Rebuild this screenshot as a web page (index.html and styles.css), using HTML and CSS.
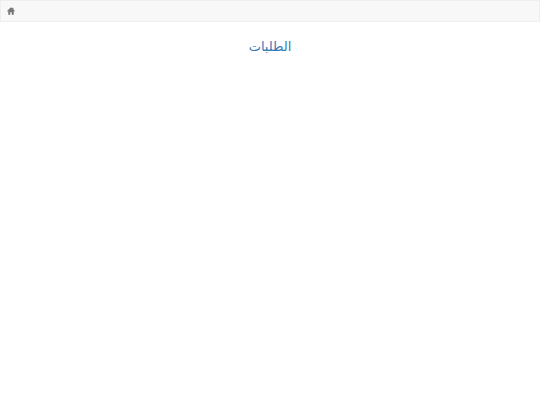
FILE: index.html
```html
<!DOCTYPE html>
<html lang="ar">
<head>
    <meta charset="UTF-8">
    <title>Orders</title>
    <link rel="stylesheet" href="styles.css">
</head>
<body>
    <div class="navbar">
        <a class="home-link" href="#">
            <svg class="home-icon" viewBox="0 0 16 16" width="8" height="8">
                <path d="M8 0.5 L0 8 L1.2 9.2 L2.5 8 V15.5 H6.5 V10.5 H9.5 V15.5 H13.5 V8 L14.8 9.2 L16 8 L13 5.2 V1.5 H10.8 V3.1 Z"/>
            </svg>
        </a>
    </div>
    <div class="content">
        <a class="orders-link" href="#">الطلبات</a>
    </div>
</body>
</html>
```

FILE: styles.css
```css
body {
    margin: 0;
    background-color: #fff;
    font-family: "Open Sans", "Noto Sans", "DejaVu Sans", sans-serif;
}

.navbar {
    display: flex;
    align-items: center;
    height: 20px;
    padding: 0 6px;
    background-color: #f8f8f8;
    border: 1px solid #eee;
}

.home-link {
    display: flex;
    color: #777;
}

.home-icon {
    fill: #777;
}

.content {
    padding-top: 12px;
    text-align: center;
}

.orders-link {
    font-size: 13px;
    color: #337ab7;
    text-decoration: none;
}
```
